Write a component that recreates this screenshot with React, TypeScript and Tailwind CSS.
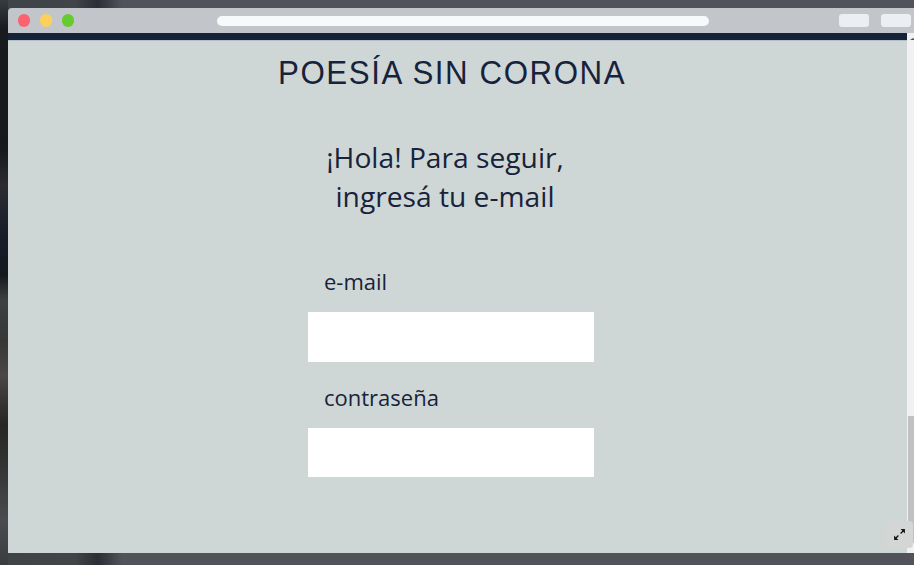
function WindowBar() {
  return (
    <header className="flex h-[25px] shrink-0 items-center rounded-tl bg-[#c2c5ca] pl-[9.5px] pr-[3px]">
      <div className="flex gap-[9.5px]">
        <span className="size-[12.5px] rounded-full bg-[#fc6270]" />
        <span className="size-[12.5px] rounded-full bg-[#fdd05b]" />
        <span className="size-[12.5px] rounded-full bg-[#66cb2d]" />
      </div>
      <div className="ml-[143px] h-[10px] w-[492px] rounded-full bg-[#f7f9fa]" />
      <div className="ml-auto flex gap-3">
        <span className="h-[13px] w-[30px] rounded-[3px] bg-[#ebeef2]" />
        <span className="h-[13px] w-[30px] rounded-[3px] bg-[#ebeef2]" />
      </div>
    </header>
  );
}

function Field({ label, type, height }: { label: string; type: string; height: string }) {
  return (
    <label className="block w-[286px]">
      <span className="block h-[30px] pl-4 text-[22px] leading-[30px]">{label}</span>
      <input type={type} className={`mt-4 block w-full bg-white outline-none ${height}`} />
    </label>
  );
}

export default function App() {
  return (
    <div className="h-[565px] w-[914px] overflow-hidden bg-[linear-gradient(90deg,#3e4347_0px,#414549_75px,#2b2e34_98px,#50535a_122px,#50545a_100%)]">
      <div className="flex h-full bg-[linear-gradient(180deg,#383c40_0px,#171b1e_30px,#15191d_150px,#2d2b31_185px,#171d29_235px,#14191d_275px,#3c4242_300px,#373737_340px,#4a4745_375px,#272525_425px,#303230_460px,#4a4b4e_520px,#393d40_565px)] bg-[length:8px_565px] bg-no-repeat pl-2">
        <div className="relative mt-2 flex h-[545px] w-[906px] flex-col">
          <WindowBar />
          <div className="flex min-h-0 flex-1">
            <main className="flex w-[899px] flex-col bg-[#cfd7d6] font-['Open_Sans',sans-serif] text-[#17223b]">
              <div className="h-[7px] shrink-0 bg-[#152239]" />
              <div className="h-px shrink-0 bg-[#b3bfc5]" />
              <h1 className="ml-[270px] mt-[11px] h-10 origin-left scale-x-[0.92] whitespace-nowrap font-['Liberation_Sans',Arial,sans-serif] text-[34px] leading-10 tracking-[1.7px]">
                POESÍA SIN CORONA
              </h1>
              <p className="ml-[300px] mt-[46px] w-[274px] whitespace-nowrap text-center text-[28.2px] leading-[39px]">
                ¡Hola! Para seguir,
                <br />
                ingresá tu e-mail
              </p>
              <form className="ml-[300px] mt-[50px] flex flex-col gap-5">
                <Field label="e-mail" type="email" height="h-[50px]" />
                <Field label="contraseña" type="password" height="h-[49px]" />
              </form>
            </main>
            <div className="flex w-[7px] flex-col bg-[#f1f1f1]">
              <svg className="ml-[3px] mt-1 h-1 w-1" viewBox="0 0 4 4">
                <path d="M0 3L3 1L4 2V3Z" fill="#505050" />
              </svg>
              <div className="ml-px mt-[375px] h-[127px] bg-[#c1c1c1]" />
            </div>
          </div>
          <button className="absolute bottom-[5px] right-px flex h-[27px] w-[27px] items-center justify-center rounded bg-[#d3d6d5]">
            <svg className="size-[13px]" viewBox="0 0 12 12" fill="none" stroke="#151515" strokeWidth="1.2">
              <path d="M7 5L10 2M5 7L2 10" />
              <path d="M7 1H11V5ZM1 7V11H5Z" fill="#151515" stroke="none" />
            </svg>
          </button>
        </div>
      </div>
    </div>
  );
}
